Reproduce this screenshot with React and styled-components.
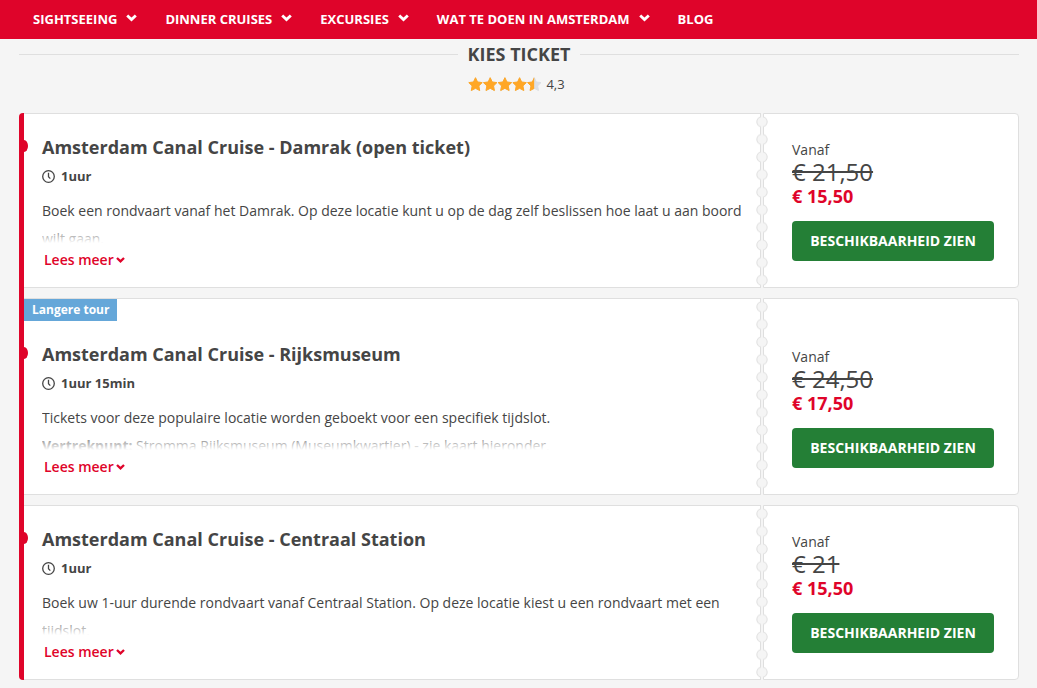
import React, { useId } from "react"
import styled, { createGlobalStyle } from "styled-components"

const colors = {
  red: "#df042a",
  green: "#247f36",
  blue: "#65a7d9",
  orange: "#ffa726",
  text: "#454545",
  page: "#f5f5f5",
  line: "#dfdfdf",
  star: "#dcdfe4",
  white: "#fff",
}

const menu = [
  { label: "Sightseeing", sub: true },
  { label: "Dinner cruises", sub: true },
  { label: "Excursies", sub: true },
  { label: "Wat te doen in Amsterdam", sub: true },
  { label: "Blog", sub: false },
]

const tickets = [
  {
    title: "Amsterdam Canal Cruise - Damrak (open ticket)",
    duration: "1uur",
    text: "Boek een rondvaart vanaf het Damrak. Op deze locatie kunt u op de dag zelf beslissen hoe laat u aan boord wilt gaan.",
    oldPrice: "€ 21,50",
    price: "€ 15,50",
  },
  {
    title: "Amsterdam Canal Cruise - Rijksmuseum",
    duration: "1uur 15min",
    label: "Langere tour",
    text: (
      <>
        Tickets voor deze populaire locatie worden geboekt voor een specifiek tijdslot.
        <br />
        <b>Vertrekpunt:</b> Stromma Rijksmuseum (Museumkwartier) - zie kaart hieronder.
      </>
    ),
    oldPrice: "€ 24,50",
    price: "€ 17,50",
  },
  {
    title: "Amsterdam Canal Cruise - Centraal Station",
    duration: "1uur",
    text: "Boek uw 1-uur durende rondvaart vanaf Centraal Station. Op deze locatie kiest u een rondvaart met een tijdslot.",
    oldPrice: "€ 21",
    price: "€ 15,50",
  },
]

export default function App() {
  return (
    <>
      <GlobalStyle />
      <Nav>
        {menu.map((item) => (
          <NavLink href="#" key={item.label}>
            {item.label}
            {item.sub && <Chevron size={11} />}
          </NavLink>
        ))}
      </Nav>
      <Main>
        <Heading>Kies ticket</Heading>
        <Rating score={4.5} label="4,3" />
        <TicketList>
          {tickets.map((ticket) => (
            <Ticket key={ticket.title} {...ticket} />
          ))}
        </TicketList>
      </Main>
    </>
  )
}

const Ticket = ({ title, duration, label, text, oldPrice, price }) => (
  <TicketRow>
    <Info $labeled={!!label}>
      {label && <Label>{label}</Label>}
      <Title>{title}</Title>
      <Duration>
        <Clock />
        {duration}
      </Duration>
      <Excerpt>{text}</Excerpt>
      <MoreButton type="button">
        Lees meer
        <Chevron size={9} />
      </MoreButton>
    </Info>
    <Perforation />
    <Pricing $labeled={!!label}>
      <From>Vanaf</From>
      <OldPrice>{oldPrice}</OldPrice>
      <Price>{price}</Price>
      <BookButton type="button">Beschikbaarheid zien</BookButton>
    </Pricing>
  </TicketRow>
)

const Chevron = ({ size }) => (
  <svg width={size} height={size} viewBox="0 0 10 10" aria-hidden="true">
    <path d="M1.1 2.2 5 5.9l3.9-3.7" fill="none" stroke="currentColor" strokeWidth="2.6" />
  </svg>
)

const Clock = () => (
  <svg width="13" height="13" viewBox="0 0 13 13" aria-hidden="true">
    <g fill="none" stroke="currentColor">
      <circle cx="6.5" cy="6.5" r="5.8" strokeWidth="1.3" />
      <path d="M6.5 2.8v4l1.8 1.8" strokeWidth="1.3" />
    </g>
  </svg>
)

const starPath = "M7.5.7l2 4.3 4.7.6-3.4 3.3.9 4.6-4.2-2.2-4.2 2.2.9-4.6L.8 5.6l4.7-.6z"

const Rating = ({ score, label }) => {
  const id = useId()
  return (
    <RatingRow>
      <svg width="74" height="15" viewBox="0 0 74 15" aria-hidden="true">
        <clipPath id={id}>
          <rect width={score * 14.7} height="15" />
        </clipPath>
        {[colors.star, colors.orange].map((fill, layer) => (
          <g
            key={fill}
            fill={fill}
            stroke={fill}
            strokeLinejoin="round"
            clipPath={layer ? `url(#${id})` : undefined}
          >
            {[0, 1, 2, 3, 4].map((n) => (
              <path key={n} d={starPath} transform={`translate(${n * 14.7} 0)`} />
            ))}
          </g>
        ))}
      </svg>
      {label}
    </RatingRow>
  )
}

const Perforation = () => {
  const id = useId()
  return (
    <PerforationSvg aria-hidden="true">
      <pattern id={id} width="12" height="17.6" patternUnits="userSpaceOnUse">
        <circle cx="6" cy="8.8" r="5.2" fill={colors.page} stroke={colors.line} />
        <rect x="5" width="2" height="17.6" fill={colors.page} />
      </pattern>
      <rect width="12" height="100%" fill={`url(#${id})`} />
    </PerforationSvg>
  )
}

const GlobalStyle = createGlobalStyle`
  *, *::before, *::after {
    box-sizing: border-box;
  }
  body {
    margin: 0;
    background: ${colors.page};
    color: ${colors.text};
    font: 14px/20px "Open Sans", sans-serif;
  }
  button {
    font: inherit;
    cursor: pointer;
  }
`

const Nav = styled.nav`
  display: flex;
  gap: 28px;
  height: 39px;
  padding: 0 33px 2px;
  background: ${colors.red};
`

const NavLink = styled.a`
  display: flex;
  align-items: center;
  gap: 9px;
  color: ${colors.white};
  font-size: 13px;
  font-weight: 700;
  text-decoration: none;
  text-transform: uppercase;
  white-space: nowrap;
`

const Main = styled.main`
  padding: 3px 18px 8px 19px;
`

const Heading = styled.h2`
  display: flex;
  align-items: center;
  gap: 10px;
  margin: 0;
  font-size: 18px;
  line-height: 25px;
  font-weight: 700;
  text-transform: uppercase;

  &::before,
  &::after {
    content: "";
    flex: 1;
    height: 1px;
    background: ${colors.line};
  }
`

const RatingRow = styled.div`
  display: flex;
  justify-content: center;
  align-items: center;
  gap: 4px;
  margin-top: 7px;
  padding-right: 5px;
  font-size: 13px;
`

const TicketList = styled.div`
  display: flex;
  flex-direction: column;
  gap: 10px;
  margin-top: 19px;
  border-left: 5px solid ${colors.red};
  border-radius: 4px;
`

const TicketRow = styled.article`
  display: flex;
`

const Info = styled.section`
  position: relative;
  flex: 1;
  min-width: 0;
  padding: ${({ $labeled }) => ($labeled ? 42 : 20)}px 12px 13px 18px;
  border: solid ${colors.line};
  border-width: 1px 1px 1px 0;
  background: ${colors.white};

  /* route stop on the red line */
  &::before {
    content: "";
    position: absolute;
    top: ${({ $labeled }) => ($labeled ? 48 : 26)}px;
    left: 0;
    width: 4px;
    height: 12px;
    border-radius: 0 4px 4px 0 / 0 6px 6px 0;
    background: ${colors.red};
  }
`

const Label = styled.span`
  position: absolute;
  top: 0;
  left: 0;
  padding: 0 8px;
  background: ${colors.blue};
  color: ${colors.white};
  font-size: 12px;
  line-height: 22px;
  font-weight: 700;
`

const Title = styled.h3`
  margin: 0;
  font-size: 18px;
  line-height: 26px;
  font-weight: 700;
`

const Duration = styled.div`
  display: flex;
  align-items: center;
  gap: 6px;
  margin-top: 6px;
  font-size: 13px;
  font-weight: 700;
`

const Excerpt = styled.div`
  position: relative;
  height: 46px;
  margin-top: 11px;
  overflow: hidden;
  line-height: 28px;

  &::after {
    content: "";
    position: absolute;
    inset: 28px 0 0;
    background: linear-gradient(rgba(255, 255, 255, 0), ${colors.white});
  }
`

const MoreButton = styled.button`
  display: flex;
  align-items: center;
  gap: 2px;
  height: 28px;
  margin-top: 3px;
  padding: 0 2px;
  border: 0;
  background: none;
  color: ${colors.red};
  font-weight: 600;
`

const PerforationSvg = styled.svg`
  z-index: 1;
  flex: none;
  align-self: stretch;
  width: 12px;
  height: auto;
  margin: 0 -5px;
`

const Pricing = styled.section`
  flex: none;
  width: 256px;
  padding: ${({ $labeled }) => ($labeled ? 48 : 26)}px 24px 26px 28px;
  border: 1px solid ${colors.line};
  border-radius: 0 4px 4px 0;
  background: ${colors.white};
`

const From = styled.div`
  line-height: 20px;
`

const OldPrice = styled.del`
  display: block;
  font-size: 24px;
  line-height: 24px;
`

const Price = styled.div`
  color: ${colors.red};
  font-size: 18px;
  line-height: 24px;
  font-weight: 700;
`

const BookButton = styled.button`
  width: 100%;
  height: 40px;
  margin-top: 13px;
  padding: 0;
  border: 0;
  border-radius: 4px;
  background: ${colors.green};
  color: ${colors.white};
  font-weight: 700;
  text-transform: uppercase;
`
